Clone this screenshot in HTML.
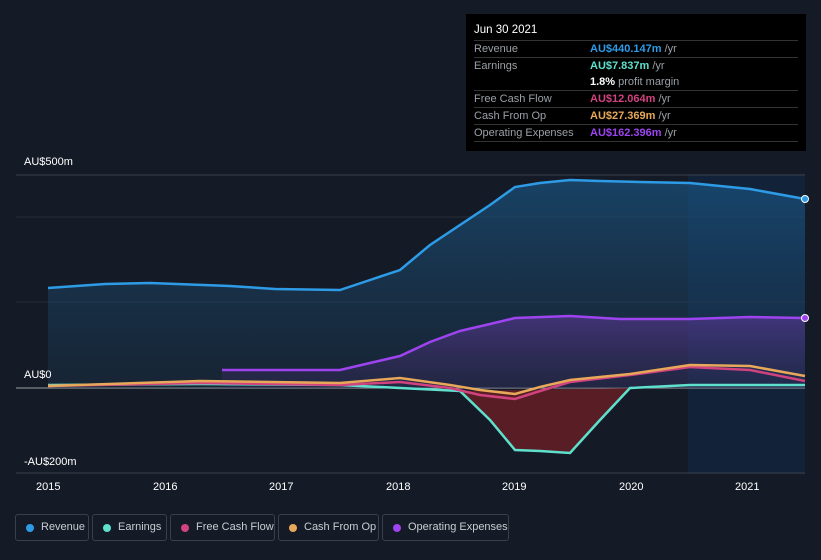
<!DOCTYPE html><html><head><style>
body{margin:0;width:821px;height:560px;background:#151b26;font-family:"Liberation Sans",sans-serif;overflow:hidden;position:relative}
.tt{position:absolute;left:466px;top:14px;width:340px;height:137px;background:#000;color:#9aa0a6;font-size:11px}
.tt .h{color:#fff;padding:10px 0 0 8px;height:16px;font-size:11.5px}
.row{position:absolute;left:8px;width:324px;border-top:1px solid #333;height:16px;line-height:16px}
.row span{position:absolute;left:116px;font-weight:bold}
.row i{font-style:normal;font-weight:normal;color:#9aa0a6}
.lg{position:absolute;top:514px;height:27px;border:1px solid #3a404a;border-radius:3px;color:#c8ccd2;font-size:11px;line-height:25px;box-sizing:border-box;padding-left:25px;white-space:nowrap;overflow:hidden}
.lg b{position:absolute;left:10px;top:9px;width:8px;height:8px;border-radius:50%}
.ax{position:absolute;color:#fff;font-size:11px}
</style></head><body>
<svg width="821" height="560" style="position:absolute;left:0;top:0">
<defs><linearGradient id="rg" x1="0" y1="0" x2="0" y2="1"><stop offset="0" stop-color="#1b5c8f" stop-opacity=".6"/><stop offset="1" stop-color="#1b3a55" stop-opacity=".3"/></linearGradient>
<linearGradient id="og" x1="0" y1="0" x2="0" y2="1"><stop offset="0" stop-color="#6a3aa8" stop-opacity=".5"/><stop offset="1" stop-color="#3a2a60" stop-opacity=".3"/></linearGradient></defs>
<rect x="688" y="174" width="117" height="300" fill="#0f2a4a" opacity=".5"/>
<line x1="16" y1="175" x2="805" y2="175" stroke="#3a404a"/>
<line x1="16" y1="217" x2="805" y2="217" stroke="#262c36"/>
<line x1="16" y1="302" x2="805" y2="302" stroke="#262c36"/>
<line x1="16" y1="388" x2="805" y2="388" stroke="#9aa0a6"/>
<line x1="16" y1="473" x2="805" y2="473" stroke="#3a404a"/>
<path d="M48,288 L105,284 150,283 230,286 275,289 340,290 370,280 400,270 430,245 490,205 515,187 540,183 570,180 600,181 640,182 690,183 750,189 805,199 L805,388 L48,388Z" fill="url(#rg)"/>
<path d="M222,370 L340,370 370,363 400,356 430,342 460,331 490,324 515,318 570,316 620,319 690,319 750,317 805,318 L805,388 L222,388Z" fill="url(#og)"/>
<path d="M460,391 L490,420 515,450 540,451 570,453 600,420 630,388Z" fill="#6a1f25" opacity=".8"/>
<g fill="none" stroke-width="2.5">
<path d="M48,288 L105,284 150,283 230,286 275,289 340,290 370,280 400,270 430,245 490,205 515,187 540,183 570,180 600,181 640,182 690,183 750,189 805,199" stroke="#2e9be6"/>
<path d="M222,370 L340,370 370,363 400,356 430,342 460,331 490,324 515,318 570,316 620,319 690,319 750,317 805,318" stroke="#9d44f0"/>
<path d="M48,385 L200,384 340,385 400,388 460,391 490,420 515,450 540,451 570,453 600,420 630,388 690,385 805,385" stroke="#5fe0cc"/>
<path d="M48,386 L200,383 340,385 400,382 450,388 480,395 515,399 540,391 570,382 630,375 690,367 750,370 805,381" stroke="#d0437f"/>
<path d="M48,386 L200,381 340,383 400,378 450,385 480,390 515,394 540,387 570,380 630,374 690,365 750,366 805,376" stroke="#e8a85a"/>
</g>
<circle cx="805" cy="199" r="3.5" fill="#2e9be6" stroke="#fff"/>
<circle cx="805" cy="318" r="3.5" fill="#9d44f0" stroke="#fff"/>
</svg>
<div class="ax" style="left:24px;top:156px">AU$500m</div>
<div class="ax" style="left:24px;top:369px">AU$0</div>
<div class="ax" style="left:24px;top:456px">-AU$200m</div>
<div class="ax" style="left:36px;top:481px">2015</div><div class="ax" style="left:153px;top:481px">2016</div><div class="ax" style="left:269px;top:481px">2017</div><div class="ax" style="left:386px;top:481px">2018</div><div class="ax" style="left:502px;top:481px">2019</div><div class="ax" style="left:619px;top:481px">2020</div><div class="ax" style="left:735px;top:481px">2021</div>
<div class="tt"><div class="h">Jun 30 2021</div>
<div class="row" style="top:26px">Revenue<span style="color:#2e9be6">AU$440.147m <i>/yr</i></span></div>
<div class="row" style="top:43px">Earnings<span style="color:#5fe0cc">AU$7.837m <i>/yr</i></span></div>
<div class="row" style="top:60px;border:0"><span style="color:#fff">1.8% <i>profit margin</i></span></div>
<div class="row" style="top:76px">Free Cash Flow<span style="color:#d0437f">AU$12.064m <i>/yr</i></span></div>
<div class="row" style="top:93px">Cash From Op<span style="color:#e8a85a">AU$27.369m <i>/yr</i></span></div>
<div class="row" style="top:110px;border-bottom:1px solid #333">Operating Expenses<span style="color:#9d44f0">AU$162.396m <i>/yr</i></span></div>
</div>
<div class="lg" style="left:15px;width:74px"><b style="background:#2e9be6"></b>Revenue</div>
<div class="lg" style="left:92px;width:75px"><b style="background:#5fe0cc"></b>Earnings</div>
<div class="lg" style="left:170px;width:105px"><b style="background:#d0437f"></b>Free Cash Flow</div>
<div class="lg" style="left:278px;width:101px"><b style="background:#e8a85a"></b>Cash From Op</div>
<div class="lg" style="left:382px;width:127px"><b style="background:#9d44f0"></b>Operating Expenses</div>
</body></html>
